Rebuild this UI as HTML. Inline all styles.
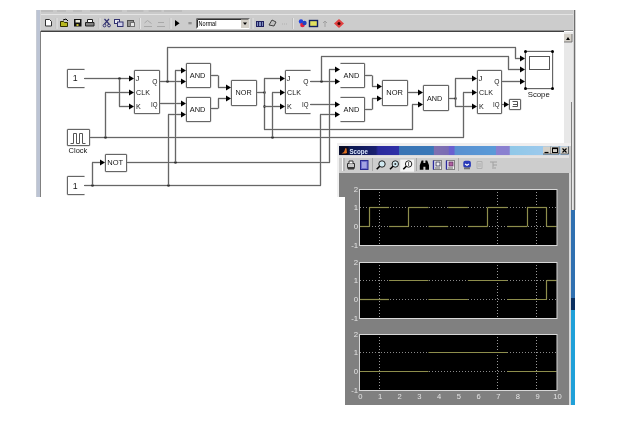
<!DOCTYPE html><html><head><meta charset="utf-8"><style>html,body{margin:0;padding:0;background:#fff;width:621px;height:432px;overflow:hidden}svg{display:block;filter:blur(0.4px);font-family:"Liberation Sans", sans-serif}.du line{stroke:#d4d4d4;stroke-width:2.2px}.d line{stroke:#666}.d text{fill:#141414}.d path,.d rect[stroke]{stroke:#555}</style></head><body>
<svg width="621" height="432" viewBox="0 0 621 432">
<rect x="36" y="10" width="540" height="21" fill="#cccccc"/>
<rect x="36" y="10" width="540" height="4.5" fill="#cacaca"/>
<line x1="36" y1="14.5" x2="576" y2="14.5" stroke="#e4e4e4" stroke-width="1" />
<line x1="36" y1="30.5" x2="576" y2="30.5" stroke="#909090" stroke-width="1" />
<line x1="40" y1="31.5" x2="564" y2="31.5" stroke="#404040" stroke-width="1" />
<rect x="36" y="10" width="5" height="187" fill="#d4d4d4"/>
<rect x="36.5" y="10" width="3.5" height="187" fill="#bcc4d4"/>
<line x1="40.5" y1="31" x2="40.5" y2="197" stroke="#808080" stroke-width="1" />
<rect x="41" y="32" width="523" height="168" fill="#ffffff"/>
<rect x="564" y="32" width="9" height="178" fill="#e8e8e8"/>
<rect x="564" y="34" width="8" height="8" fill="#d4d0c8"/>
<path d="M564,42 h8 v-8" fill="none" stroke="#606060" stroke-width="0.8"/>
<polygon points="566,40 568,37 570,40" fill="#000"/>
<line x1="571.5" y1="102" x2="571.5" y2="210" stroke="#808080" stroke-width="1" />
<rect x="573" y="10" width="3" height="200" fill="#d4d4d4"/>
<line x1="574.5" y1="10" x2="574.5" y2="210" stroke="#707070" stroke-width="1" />
<rect x="41" y="10" width="12" height="2" fill="#bdbdbd"/>
<rect x="57" y="10" width="9" height="2" fill="#bdbdbd"/>
<rect x="73" y="10" width="9" height="2" fill="#bdbdbd"/>
<rect x="90" y="10" width="32" height="2" fill="#bdbdbd"/>
<rect x="127" y="10" width="16.5" height="2" fill="#bdbdbd"/>
<rect x="148.6" y="10" width="12.900000000000006" height="2" fill="#bdbdbd"/>
<rect x="164" y="10" width="18" height="2" fill="#bdbdbd"/>
<line x1="56" y1="18" x2="56" y2="29" stroke="#bcbcbc" stroke-width="1" />
<line x1="57" y1="18" x2="57" y2="29" stroke="#e4e4e4" stroke-width="1" />
<line x1="99" y1="18" x2="99" y2="29" stroke="#bcbcbc" stroke-width="1" />
<line x1="100" y1="18" x2="100" y2="29" stroke="#e4e4e4" stroke-width="1" />
<line x1="139.5" y1="18" x2="139.5" y2="29" stroke="#bcbcbc" stroke-width="1" />
<line x1="140.5" y1="18" x2="140.5" y2="29" stroke="#e4e4e4" stroke-width="1" />
<line x1="170" y1="18" x2="170" y2="29" stroke="#bcbcbc" stroke-width="1" />
<line x1="171" y1="18" x2="171" y2="29" stroke="#e4e4e4" stroke-width="1" />
<line x1="252" y1="18" x2="252" y2="29" stroke="#bcbcbc" stroke-width="1" />
<line x1="253" y1="18" x2="253" y2="29" stroke="#e4e4e4" stroke-width="1" />
<line x1="292.5" y1="18" x2="292.5" y2="29" stroke="#bcbcbc" stroke-width="1" />
<line x1="293.5" y1="18" x2="293.5" y2="29" stroke="#e4e4e4" stroke-width="1" />
<path d="M45.5,19.5 h4 l2,2 v4.5 h-6 z" fill="#fff" stroke="#303030" stroke-width="1"/>
<path d="M60.5,21.5 h3 l1,1 h3 v4 h-7 z" fill="#b8b820" stroke="#303000" stroke-width="1"/>
<path d="M63,20 l3,-1 l2,2" fill="none" stroke="#000" stroke-width="1"/>
<rect x="74" y="19" width="7.5" height="7.5" fill="#101010"/>
<rect x="75.5" y="20" width="4.5" height="2.5" fill="#e8e8d8"/>
<rect x="76.5" y="24" width="2.0" height="2" fill="#c8c030"/>
<path d="M85.5,22.5 h8.5 v3.5 h-8.5 z" fill="#808080" stroke="#202020" stroke-width="1"/>
<path d="M87.5,19.5 h5 v3 h-5 z" fill="#fff" stroke="#202020" stroke-width="1"/>
<path d="M104.5,19 l4.5,5 M109,19 l-4.5,5" stroke="#303070" stroke-width="1.2" fill="none"/>
<circle cx="104.5" cy="25.5" r="1.4" fill="none" stroke="#303070"/><circle cx="109" cy="25.5" r="1.4" fill="none" stroke="#303070"/>
<rect x="114.5" y="19.5" width="5" height="4" fill="#e8e8f0" stroke="#303070"/><rect x="117.5" y="22" width="5.5" height="4.5" fill="#d0d0e8" stroke="#303070"/>
<rect x="127.5" y="20.5" width="6" height="6" fill="#909090" stroke="#505050"/><rect x="130.5" y="22.5" width="4" height="4" fill="#e8e8e8" stroke="#707070"/>
<path d="M144,26.5 h8 M144.5,23 l3,-2.5 l4,3" stroke="#a8a8a8" fill="none"/>
<path d="M157,26.5 h8 M158,22.5 h6" stroke="#a8a8a8" fill="none"/>
<polygon points="175,20 179.6,23.2 175,26.4" fill="#000"/>
<rect x="188.4" y="22" width="3.299999999999983" height="2.3000000000000007" fill="#909090"/>
<rect x="196" y="18" width="53.5" height="11" fill="#ffffff"/>
<path d="M196.5,28.5 v-10 h53" fill="none" stroke="#707070"/>
<path d="M197.5,27.5 v-8 h51" fill="none" stroke="#303030"/>
<rect x="241" y="19.5" width="8" height="8.5" fill="#d4d0c8"/>
<polygon points="243,22.5 247,22.5 245,25" fill="#000"/>
<text x="198.6" y="25.8" font-size="6.6" fill="#000" font-weight="normal" textLength="17.80" lengthAdjust="spacingAndGlyphs">Normal</text>
<rect x="256.5" y="21.5" width="7" height="5" fill="#8090c0" stroke="#202060"/><path d="M258.5,21.5 v5 M261.5,21.5 v5" stroke="#202060"/>
<path d="M269,25 l3,-5 l4,2 l-2,4 z" fill="#c0c0c0" stroke="#404040"/>
<path d="M282,24 h6" stroke="#b0b0b0" stroke-dasharray="1,1"/>
<circle cx="301" cy="21.5" r="2.2" fill="#2040e0"/><circle cx="302.5" cy="25" r="2.3" fill="#e02040"/><circle cx="304.5" cy="23" r="2.2" fill="#2040c0"/>
<rect x="309.5" y="20.5" width="8" height="6" fill="#e0e060" stroke="#102060" stroke-width="1.4"/>
<path d="M325,27 v-6 l-2,2 M325,21 l2,2" stroke="#a0a0a0" fill="none"/>
<polygon points="339,19 344,23.5 339,28 334,23.5" fill="#e04040"/><circle cx="339" cy="23.5" r="1.5" fill="#400000"/>
<g class="du"><line x1="67.5" y1="69.5" x2="84.5" y2="69.5" stroke="#000" stroke-width="1" />
<line x1="67.5" y1="87.5" x2="84.5" y2="87.5" stroke="#000" stroke-width="1" />
<line x1="67.5" y1="69.5" x2="67.5" y2="87.5" stroke="#000" stroke-width="1" />
<line x1="67.5" y1="176.5" x2="84.5" y2="176.5" stroke="#000" stroke-width="1" />
<line x1="67.5" y1="194.5" x2="84.5" y2="194.5" stroke="#000" stroke-width="1" />
<line x1="67.5" y1="176.5" x2="67.5" y2="194.5" stroke="#000" stroke-width="1" />
<line x1="67.5" y1="129.5" x2="89.5" y2="129.5" stroke="#000" stroke-width="1" />
<line x1="67.5" y1="145.5" x2="89.5" y2="145.5" stroke="#000" stroke-width="1" />
<line x1="67.5" y1="129.5" x2="67.5" y2="145.5" stroke="#000" stroke-width="1" />
<line x1="89.5" y1="129.5" x2="89.5" y2="145.5" stroke="#000" stroke-width="1" />
<line x1="105.5" y1="154.5" x2="126.5" y2="154.5" stroke="#000" stroke-width="1" />
<line x1="105.5" y1="171.5" x2="126.5" y2="171.5" stroke="#000" stroke-width="1" />
<line x1="105.5" y1="154.5" x2="105.5" y2="171.5" stroke="#000" stroke-width="1" />
<line x1="126.5" y1="154.5" x2="126.5" y2="171.5" stroke="#000" stroke-width="1" />
<line x1="134.5" y1="70.5" x2="159.5" y2="70.5" stroke="#000" stroke-width="1" />
<line x1="134.5" y1="113.5" x2="159.5" y2="113.5" stroke="#000" stroke-width="1" />
<line x1="134.5" y1="70.5" x2="134.5" y2="113.5" stroke="#000" stroke-width="1" />
<line x1="159.5" y1="70.5" x2="159.5" y2="113.5" stroke="#000" stroke-width="1" />
<line x1="285.5" y1="70.5" x2="310.5" y2="70.5" stroke="#000" stroke-width="1" />
<line x1="285.5" y1="113.5" x2="310.5" y2="113.5" stroke="#000" stroke-width="1" />
<line x1="285.5" y1="70.5" x2="285.5" y2="113.5" stroke="#000" stroke-width="1" />
<line x1="477.5" y1="70.5" x2="501.5" y2="70.5" stroke="#000" stroke-width="1" />
<line x1="477.5" y1="113.5" x2="501.5" y2="113.5" stroke="#000" stroke-width="1" />
<line x1="477.5" y1="70.5" x2="477.5" y2="113.5" stroke="#000" stroke-width="1" />
<line x1="501.5" y1="70.5" x2="501.5" y2="113.5" stroke="#000" stroke-width="1" />
<line x1="186.5" y1="63.5" x2="210.5" y2="63.5" stroke="#000" stroke-width="1" />
<line x1="186.5" y1="87.5" x2="210.5" y2="87.5" stroke="#000" stroke-width="1" />
<line x1="186.5" y1="63.5" x2="186.5" y2="87.5" stroke="#000" stroke-width="1" />
<line x1="210.5" y1="63.5" x2="210.5" y2="87.5" stroke="#000" stroke-width="1" />
<line x1="186.5" y1="97.5" x2="210.5" y2="97.5" stroke="#000" stroke-width="1" />
<line x1="186.5" y1="121.5" x2="210.5" y2="121.5" stroke="#000" stroke-width="1" />
<line x1="186.5" y1="97.5" x2="186.5" y2="121.5" stroke="#000" stroke-width="1" />
<line x1="210.5" y1="97.5" x2="210.5" y2="121.5" stroke="#000" stroke-width="1" />
<line x1="340.5" y1="63.5" x2="364.5" y2="63.5" stroke="#000" stroke-width="1" />
<line x1="340.5" y1="87.5" x2="364.5" y2="87.5" stroke="#000" stroke-width="1" />
<line x1="364.5" y1="63.5" x2="364.5" y2="87.5" stroke="#000" stroke-width="1" />
<line x1="340.5" y1="97.5" x2="364.5" y2="97.5" stroke="#000" stroke-width="1" />
<line x1="340.5" y1="121.5" x2="364.5" y2="121.5" stroke="#000" stroke-width="1" />
<line x1="364.5" y1="97.5" x2="364.5" y2="121.5" stroke="#000" stroke-width="1" />
<line x1="423.5" y1="85.5" x2="448.5" y2="85.5" stroke="#000" stroke-width="1" />
<line x1="423.5" y1="110.5" x2="448.5" y2="110.5" stroke="#000" stroke-width="1" />
<line x1="423.5" y1="85.5" x2="423.5" y2="110.5" stroke="#000" stroke-width="1" />
<line x1="448.5" y1="85.5" x2="448.5" y2="110.5" stroke="#000" stroke-width="1" />
<line x1="231.5" y1="80.5" x2="256.5" y2="80.5" stroke="#000" stroke-width="1" />
<line x1="231.5" y1="105.5" x2="256.5" y2="105.5" stroke="#000" stroke-width="1" />
<line x1="231.5" y1="80.5" x2="231.5" y2="105.5" stroke="#000" stroke-width="1" />
<line x1="256.5" y1="80.5" x2="256.5" y2="105.5" stroke="#000" stroke-width="1" />
<line x1="382.5" y1="80.5" x2="407.5" y2="80.5" stroke="#000" stroke-width="1" />
<line x1="382.5" y1="105.5" x2="407.5" y2="105.5" stroke="#000" stroke-width="1" />
<line x1="382.5" y1="80.5" x2="382.5" y2="105.5" stroke="#000" stroke-width="1" />
<line x1="407.5" y1="80.5" x2="407.5" y2="105.5" stroke="#000" stroke-width="1" />
<line x1="525.5" y1="51.5" x2="552.5" y2="51.5" stroke="#000" stroke-width="1" />
<line x1="525.5" y1="88.5" x2="552.5" y2="88.5" stroke="#000" stroke-width="1" />
<line x1="525.5" y1="51.5" x2="525.5" y2="88.5" stroke="#000" stroke-width="1" />
<line x1="552.5" y1="51.5" x2="552.5" y2="88.5" stroke="#000" stroke-width="1" />
<line x1="509.5" y1="99.5" x2="520.5" y2="99.5" stroke="#000" stroke-width="1" />
<line x1="509.5" y1="109.5" x2="520.5" y2="109.5" stroke="#000" stroke-width="1" />
<line x1="509.5" y1="99.5" x2="509.5" y2="109.5" stroke="#000" stroke-width="1" />
<line x1="520.5" y1="99.5" x2="520.5" y2="109.5" stroke="#000" stroke-width="1" />
<line x1="84" y1="78.5" x2="130" y2="78.5" stroke="#000" stroke-width="1" />
<line x1="119.5" y1="78.5" x2="119.5" y2="106.5" stroke="#000" stroke-width="1" />
<line x1="119" y1="106.5" x2="130" y2="106.5" stroke="#000" stroke-width="1" />
<line x1="89" y1="137.5" x2="464" y2="137.5" stroke="#000" stroke-width="1" />
<line x1="105.5" y1="92.5" x2="105.5" y2="137.5" stroke="#000" stroke-width="1" />
<line x1="105" y1="92.5" x2="130" y2="92.5" stroke="#000" stroke-width="1" />
<line x1="272.5" y1="92.5" x2="272.5" y2="137.5" stroke="#000" stroke-width="1" />
<line x1="272" y1="92.5" x2="281" y2="92.5" stroke="#000" stroke-width="1" />
<line x1="463.5" y1="92.5" x2="463.5" y2="137.5" stroke="#000" stroke-width="1" />
<line x1="463" y1="92.5" x2="473" y2="92.5" stroke="#000" stroke-width="1" />
<line x1="159" y1="81.5" x2="182" y2="81.5" stroke="#000" stroke-width="1" />
<line x1="167.5" y1="47.5" x2="167.5" y2="81.5" stroke="#000" stroke-width="1" />
<line x1="167" y1="47.5" x2="516" y2="47.5" stroke="#000" stroke-width="1" />
<line x1="515.5" y1="47.5" x2="515.5" y2="58.5" stroke="#000" stroke-width="1" />
<line x1="515" y1="58.5" x2="521" y2="58.5" stroke="#000" stroke-width="1" />
<line x1="159" y1="103.5" x2="182" y2="103.5" stroke="#000" stroke-width="1" />
<line x1="84" y1="185.5" x2="321" y2="185.5" stroke="#000" stroke-width="1" />
<line x1="92.5" y1="162.5" x2="92.5" y2="185.5" stroke="#000" stroke-width="1" />
<line x1="92" y1="162.5" x2="101" y2="162.5" stroke="#000" stroke-width="1" />
<line x1="168.5" y1="114.5" x2="168.5" y2="185.5" stroke="#000" stroke-width="1" />
<line x1="168" y1="114.5" x2="182" y2="114.5" stroke="#000" stroke-width="1" />
<line x1="320.5" y1="114.5" x2="320.5" y2="185.5" stroke="#000" stroke-width="1" />
<line x1="320" y1="114.5" x2="336" y2="114.5" stroke="#000" stroke-width="1" />
<line x1="127" y1="162.5" x2="330" y2="162.5" stroke="#000" stroke-width="1" />
<line x1="175.5" y1="70.5" x2="175.5" y2="162.5" stroke="#000" stroke-width="1" />
<line x1="175" y1="70.5" x2="182" y2="70.5" stroke="#000" stroke-width="1" />
<line x1="329.5" y1="69.5" x2="329.5" y2="162.5" stroke="#000" stroke-width="1" />
<line x1="329" y1="69.5" x2="336" y2="69.5" stroke="#000" stroke-width="1" />
<line x1="211" y1="75.5" x2="218" y2="75.5" stroke="#000" stroke-width="1" />
<line x1="218.5" y1="75.5" x2="218.5" y2="87.5" stroke="#000" stroke-width="1" />
<line x1="218" y1="87.5" x2="227" y2="87.5" stroke="#000" stroke-width="1" />
<line x1="211" y1="108.5" x2="218" y2="108.5" stroke="#000" stroke-width="1" />
<line x1="218.5" y1="98.5" x2="218.5" y2="108.5" stroke="#000" stroke-width="1" />
<line x1="218" y1="98.5" x2="227" y2="98.5" stroke="#000" stroke-width="1" />
<line x1="256" y1="92.5" x2="264" y2="92.5" stroke="#000" stroke-width="1" />
<line x1="264.5" y1="78.5" x2="264.5" y2="129.5" stroke="#000" stroke-width="1" />
<line x1="264" y1="78.5" x2="281" y2="78.5" stroke="#000" stroke-width="1" />
<line x1="264" y1="106.5" x2="281" y2="106.5" stroke="#000" stroke-width="1" />
<line x1="264" y1="129.5" x2="413" y2="129.5" stroke="#000" stroke-width="1" />
<line x1="412.5" y1="104.5" x2="412.5" y2="129.5" stroke="#000" stroke-width="1" />
<line x1="412" y1="104.5" x2="419" y2="104.5" stroke="#000" stroke-width="1" />
<line x1="310" y1="81.5" x2="336" y2="81.5" stroke="#000" stroke-width="1" />
<line x1="321.5" y1="56.5" x2="321.5" y2="81.5" stroke="#000" stroke-width="1" />
<line x1="321" y1="56.5" x2="509" y2="56.5" stroke="#000" stroke-width="1" />
<line x1="508.5" y1="56.5" x2="508.5" y2="69.5" stroke="#000" stroke-width="1" />
<line x1="508" y1="69.5" x2="521" y2="69.5" stroke="#000" stroke-width="1" />
<line x1="310" y1="104.5" x2="336" y2="104.5" stroke="#000" stroke-width="1" />
<line x1="364" y1="75.5" x2="372" y2="75.5" stroke="#000" stroke-width="1" />
<line x1="372.5" y1="75.5" x2="372.5" y2="86.5" stroke="#000" stroke-width="1" />
<line x1="372" y1="86.5" x2="378" y2="86.5" stroke="#000" stroke-width="1" />
<line x1="364" y1="109.5" x2="372" y2="109.5" stroke="#000" stroke-width="1" />
<line x1="372.5" y1="98.5" x2="372.5" y2="109.5" stroke="#000" stroke-width="1" />
<line x1="372" y1="98.5" x2="378" y2="98.5" stroke="#000" stroke-width="1" />
<line x1="408" y1="92.5" x2="419" y2="92.5" stroke="#000" stroke-width="1" />
<line x1="448" y1="98.5" x2="455" y2="98.5" stroke="#000" stroke-width="1" />
<line x1="455.5" y1="78.5" x2="455.5" y2="106.5" stroke="#000" stroke-width="1" />
<line x1="455" y1="78.5" x2="473" y2="78.5" stroke="#000" stroke-width="1" />
<line x1="455" y1="106.5" x2="473" y2="106.5" stroke="#000" stroke-width="1" />
<line x1="501" y1="81.5" x2="521" y2="81.5" stroke="#000" stroke-width="1" />
<line x1="501" y1="104.5" x2="505" y2="104.5" stroke="#000" stroke-width="1" /></g>
<g class="d"><rect x="67.5" y="69.5" width="17.0" height="18.0" fill="#ffffff"/>
<line x1="67.5" y1="69.5" x2="84.5" y2="69.5" stroke="#000" stroke-width="1" />
<line x1="67.5" y1="87.5" x2="84.5" y2="87.5" stroke="#000" stroke-width="1" />
<line x1="67.5" y1="69.5" x2="67.5" y2="87.5" stroke="#000" stroke-width="1" />
<text x="75.3" y="81.3" font-size="8.8" fill="#000" text-anchor="middle" font-weight="normal" >1</text>
<rect x="67.5" y="176.5" width="17.0" height="18.0" fill="#ffffff"/>
<line x1="67.5" y1="176.5" x2="84.5" y2="176.5" stroke="#000" stroke-width="1" />
<line x1="67.5" y1="194.5" x2="84.5" y2="194.5" stroke="#000" stroke-width="1" />
<line x1="67.5" y1="176.5" x2="67.5" y2="194.5" stroke="#000" stroke-width="1" />
<text x="75.3" y="188.5" font-size="8.8" fill="#000" text-anchor="middle" font-weight="normal" >1</text>
<rect x="67.5" y="129.5" width="22.0" height="16.0" fill="#ffffff"/>
<line x1="67.5" y1="129.5" x2="89.5" y2="129.5" stroke="#000" stroke-width="1" />
<line x1="67.5" y1="145.5" x2="89.5" y2="145.5" stroke="#000" stroke-width="1" />
<line x1="67.5" y1="129.5" x2="67.5" y2="145.5" stroke="#000" stroke-width="1" />
<line x1="89.5" y1="129.5" x2="89.5" y2="145.5" stroke="#000" stroke-width="1" />
<path d="M70.5,143.5 h3 v-10 h3 v10 h3 v-10 h3 v10 h3" fill="none" stroke="#000"/>
<text x="68.6" y="153.3" font-size="8" fill="#000" font-weight="normal" textLength="18.70" lengthAdjust="spacingAndGlyphs">Clock</text>
<rect x="105.5" y="154.5" width="21.0" height="17.0" fill="#ffffff"/>
<line x1="105.5" y1="154.5" x2="126.5" y2="154.5" stroke="#000" stroke-width="1" />
<line x1="105.5" y1="171.5" x2="126.5" y2="171.5" stroke="#000" stroke-width="1" />
<line x1="105.5" y1="154.5" x2="105.5" y2="171.5" stroke="#000" stroke-width="1" />
<line x1="126.5" y1="154.5" x2="126.5" y2="171.5" stroke="#000" stroke-width="1" />
<text x="107.3" y="165" font-size="8" fill="#000" font-weight="normal" textLength="15.90" lengthAdjust="spacingAndGlyphs">NOT</text>
<rect x="134.5" y="70.5" width="25.0" height="43.0" fill="#ffffff"/>
<line x1="134.5" y1="70.5" x2="159.5" y2="70.5" stroke="#000" stroke-width="1" />
<line x1="134.5" y1="113.5" x2="159.5" y2="113.5" stroke="#000" stroke-width="1" />
<line x1="134.5" y1="70.5" x2="134.5" y2="113.5" stroke="#000" stroke-width="1" />
<line x1="159.5" y1="70.5" x2="159.5" y2="113.5" stroke="#000" stroke-width="1" />
<text x="135.6" y="81" font-size="8" fill="#000" font-weight="normal" textLength="3.80" lengthAdjust="spacingAndGlyphs">J</text>
<text x="136.1" y="95.1" font-size="8" fill="#000" font-weight="normal" textLength="13.80" lengthAdjust="spacingAndGlyphs">CLK</text>
<text x="136.1" y="109.1" font-size="8" fill="#000" font-weight="normal" textLength="4.80" lengthAdjust="spacingAndGlyphs">K</text>
<text x="152.29999999999998" y="83.8" font-size="7.8" fill="#000" font-weight="normal" textLength="5.20" lengthAdjust="spacingAndGlyphs">Q</text>
<text x="151.1" y="106.7" font-size="7.8" fill="#000" font-weight="normal" textLength="6.50" lengthAdjust="spacingAndGlyphs">IQ</text>
<rect x="285.5" y="70.5" width="25.0" height="43.0" fill="#ffffff"/>
<line x1="285.5" y1="70.5" x2="310.5" y2="70.5" stroke="#000" stroke-width="1" />
<line x1="285.5" y1="113.5" x2="310.5" y2="113.5" stroke="#000" stroke-width="1" />
<line x1="285.5" y1="70.5" x2="285.5" y2="113.5" stroke="#000" stroke-width="1" />
<text x="286.6" y="81" font-size="8" fill="#000" font-weight="normal" textLength="3.80" lengthAdjust="spacingAndGlyphs">J</text>
<text x="287.1" y="95.1" font-size="8" fill="#000" font-weight="normal" textLength="13.80" lengthAdjust="spacingAndGlyphs">CLK</text>
<text x="287.1" y="109.1" font-size="8" fill="#000" font-weight="normal" textLength="4.80" lengthAdjust="spacingAndGlyphs">K</text>
<text x="303.3" y="83.8" font-size="7.8" fill="#000" font-weight="normal" textLength="5.20" lengthAdjust="spacingAndGlyphs">Q</text>
<text x="302.1" y="106.7" font-size="7.8" fill="#000" font-weight="normal" textLength="6.50" lengthAdjust="spacingAndGlyphs">IQ</text>
<rect x="477.5" y="70.5" width="24.0" height="43.0" fill="#ffffff"/>
<line x1="477.5" y1="70.5" x2="501.5" y2="70.5" stroke="#000" stroke-width="1" />
<line x1="477.5" y1="113.5" x2="501.5" y2="113.5" stroke="#000" stroke-width="1" />
<line x1="477.5" y1="70.5" x2="477.5" y2="113.5" stroke="#000" stroke-width="1" />
<line x1="501.5" y1="70.5" x2="501.5" y2="113.5" stroke="#000" stroke-width="1" />
<text x="478.6" y="81" font-size="8" fill="#000" font-weight="normal" textLength="3.80" lengthAdjust="spacingAndGlyphs">J</text>
<text x="479.1" y="95.1" font-size="8" fill="#000" font-weight="normal" textLength="13.80" lengthAdjust="spacingAndGlyphs">CLK</text>
<text x="479.1" y="109.1" font-size="8" fill="#000" font-weight="normal" textLength="4.80" lengthAdjust="spacingAndGlyphs">K</text>
<text x="494.3" y="83.8" font-size="7.8" fill="#000" font-weight="normal" textLength="5.20" lengthAdjust="spacingAndGlyphs">Q</text>
<text x="493.1" y="106.7" font-size="7.8" fill="#000" font-weight="normal" textLength="6.50" lengthAdjust="spacingAndGlyphs">IQ</text>
<rect x="186.5" y="63.5" width="24.0" height="24.0" fill="#ffffff"/>
<line x1="186.5" y1="63.5" x2="210.5" y2="63.5" stroke="#000" stroke-width="1" />
<line x1="186.5" y1="87.5" x2="210.5" y2="87.5" stroke="#000" stroke-width="1" />
<line x1="186.5" y1="63.5" x2="186.5" y2="87.5" stroke="#000" stroke-width="1" />
<line x1="210.5" y1="63.5" x2="210.5" y2="87.5" stroke="#000" stroke-width="1" />
<text x="189.7" y="77.8" font-size="8.1" fill="#000" font-weight="normal" textLength="15.70" lengthAdjust="spacingAndGlyphs">AND</text>
<rect x="186.5" y="97.5" width="24.0" height="24.0" fill="#ffffff"/>
<line x1="186.5" y1="97.5" x2="210.5" y2="97.5" stroke="#000" stroke-width="1" />
<line x1="186.5" y1="121.5" x2="210.5" y2="121.5" stroke="#000" stroke-width="1" />
<line x1="186.5" y1="97.5" x2="186.5" y2="121.5" stroke="#000" stroke-width="1" />
<line x1="210.5" y1="97.5" x2="210.5" y2="121.5" stroke="#000" stroke-width="1" />
<text x="189.7" y="111.6" font-size="8.1" fill="#000" font-weight="normal" textLength="15.70" lengthAdjust="spacingAndGlyphs">AND</text>
<rect x="340.5" y="63.5" width="24.0" height="24.0" fill="#ffffff"/>
<line x1="340.5" y1="63.5" x2="364.5" y2="63.5" stroke="#000" stroke-width="1" />
<line x1="340.5" y1="87.5" x2="364.5" y2="87.5" stroke="#000" stroke-width="1" />
<line x1="364.5" y1="63.5" x2="364.5" y2="87.5" stroke="#000" stroke-width="1" />
<text x="343.6" y="78.1" font-size="8.1" fill="#000" font-weight="normal" textLength="15.80" lengthAdjust="spacingAndGlyphs">AND</text>
<rect x="340.5" y="97.5" width="24.0" height="24.0" fill="#ffffff"/>
<line x1="340.5" y1="97.5" x2="364.5" y2="97.5" stroke="#000" stroke-width="1" />
<line x1="340.5" y1="121.5" x2="364.5" y2="121.5" stroke="#000" stroke-width="1" />
<line x1="364.5" y1="97.5" x2="364.5" y2="121.5" stroke="#000" stroke-width="1" />
<text x="343.6" y="111.8" font-size="8.1" fill="#000" font-weight="normal" textLength="15.80" lengthAdjust="spacingAndGlyphs">AND</text>
<rect x="423.5" y="85.5" width="25.0" height="25.0" fill="#ffffff"/>
<line x1="423.5" y1="85.5" x2="448.5" y2="85.5" stroke="#000" stroke-width="1" />
<line x1="423.5" y1="110.5" x2="448.5" y2="110.5" stroke="#000" stroke-width="1" />
<line x1="423.5" y1="85.5" x2="423.5" y2="110.5" stroke="#000" stroke-width="1" />
<line x1="448.5" y1="85.5" x2="448.5" y2="110.5" stroke="#000" stroke-width="1" />
<text x="427.0" y="100.9" font-size="8.1" fill="#000" font-weight="normal" textLength="15.30" lengthAdjust="spacingAndGlyphs">AND</text>
<rect x="231.5" y="80.5" width="25.0" height="25.0" fill="#ffffff"/>
<line x1="231.5" y1="80.5" x2="256.5" y2="80.5" stroke="#000" stroke-width="1" />
<line x1="231.5" y1="105.5" x2="256.5" y2="105.5" stroke="#000" stroke-width="1" />
<line x1="231.5" y1="80.5" x2="231.5" y2="105.5" stroke="#000" stroke-width="1" />
<line x1="256.5" y1="80.5" x2="256.5" y2="105.5" stroke="#000" stroke-width="1" />
<text x="235.6" y="95.4" font-size="8" fill="#000" font-weight="normal" textLength="16.10" lengthAdjust="spacingAndGlyphs">NOR</text>
<rect x="382.5" y="80.5" width="25.0" height="25.0" fill="#ffffff"/>
<line x1="382.5" y1="80.5" x2="407.5" y2="80.5" stroke="#000" stroke-width="1" />
<line x1="382.5" y1="105.5" x2="407.5" y2="105.5" stroke="#000" stroke-width="1" />
<line x1="382.5" y1="80.5" x2="382.5" y2="105.5" stroke="#000" stroke-width="1" />
<line x1="407.5" y1="80.5" x2="407.5" y2="105.5" stroke="#000" stroke-width="1" />
<text x="386.3" y="95.2" font-size="8" fill="#000" font-weight="normal" textLength="16.60" lengthAdjust="spacingAndGlyphs">NOR</text>
<rect x="525.5" y="51.5" width="27.0" height="37.0" fill="#ffffff"/>
<line x1="525.5" y1="51.5" x2="552.5" y2="51.5" stroke="#000" stroke-width="1" />
<line x1="525.5" y1="88.5" x2="552.5" y2="88.5" stroke="#000" stroke-width="1" />
<line x1="525.5" y1="51.5" x2="525.5" y2="88.5" stroke="#000" stroke-width="1" />
<line x1="552.5" y1="51.5" x2="552.5" y2="88.5" stroke="#000" stroke-width="1" />
<rect x="529.5" y="56.5" width="20" height="13" fill="#fff" stroke="#000"/>
<circle cx="525.5" cy="51.5" r="1.5" fill="#000"/>
<circle cx="552.5" cy="51.5" r="1.5" fill="#000"/>
<circle cx="525.5" cy="88.5" r="1.5" fill="#000"/>
<circle cx="552.5" cy="88.5" r="1.5" fill="#000"/>
<text x="527.7" y="96.5" font-size="8" fill="#000" font-weight="normal" textLength="22.10" lengthAdjust="spacingAndGlyphs">Scope</text>
<rect x="509.5" y="99.5" width="11.0" height="10.0" fill="#ffffff"/>
<line x1="509.5" y1="99.5" x2="520.5" y2="99.5" stroke="#000" stroke-width="1" />
<line x1="509.5" y1="109.5" x2="520.5" y2="109.5" stroke="#000" stroke-width="1" />
<line x1="509.5" y1="99.5" x2="509.5" y2="109.5" stroke="#000" stroke-width="1" />
<line x1="520.5" y1="99.5" x2="520.5" y2="109.5" stroke="#000" stroke-width="1" />
<path d="M512.5,101.5 h5 v5 h-5 M513,104.5 h4.5" fill="none" stroke="#000"/>
<line x1="84" y1="78.5" x2="130" y2="78.5" stroke="#000" stroke-width="1" />
<polygon points="134,78.5 129,75.5 129,81.5" fill="#000"/>
<rect x="118.5" y="77.5" width="2" height="2" fill="#000"/>
<line x1="119.5" y1="78.5" x2="119.5" y2="106.5" stroke="#000" stroke-width="1" />
<line x1="119" y1="106.5" x2="130" y2="106.5" stroke="#000" stroke-width="1" />
<polygon points="134,106.5 129,103.5 129,109.5" fill="#000"/>
<line x1="89" y1="137.5" x2="464" y2="137.5" stroke="#000" stroke-width="1" />
<rect x="104.5" y="136.5" width="2" height="2" fill="#000"/>
<line x1="105.5" y1="92.5" x2="105.5" y2="137.5" stroke="#000" stroke-width="1" />
<line x1="105" y1="92.5" x2="130" y2="92.5" stroke="#000" stroke-width="1" />
<polygon points="134,92.5 129,89.5 129,95.5" fill="#000"/>
<rect x="271.5" y="136.5" width="2" height="2" fill="#000"/>
<line x1="272.5" y1="92.5" x2="272.5" y2="137.5" stroke="#000" stroke-width="1" />
<line x1="272" y1="92.5" x2="281" y2="92.5" stroke="#000" stroke-width="1" />
<polygon points="285,92.5 280,89.5 280,95.5" fill="#000"/>
<line x1="463.5" y1="92.5" x2="463.5" y2="137.5" stroke="#000" stroke-width="1" />
<line x1="463" y1="92.5" x2="473" y2="92.5" stroke="#000" stroke-width="1" />
<polygon points="477,92.5 472,89.5 472,95.5" fill="#000"/>
<line x1="159" y1="81.5" x2="182" y2="81.5" stroke="#000" stroke-width="1" />
<polygon points="186,81.5 181,78.5 181,84.5" fill="#000"/>
<rect x="166.5" y="80.5" width="2" height="2" fill="#000"/>
<line x1="167.5" y1="47.5" x2="167.5" y2="81.5" stroke="#000" stroke-width="1" />
<line x1="167" y1="47.5" x2="516" y2="47.5" stroke="#000" stroke-width="1" />
<line x1="515.5" y1="47.5" x2="515.5" y2="58.5" stroke="#000" stroke-width="1" />
<line x1="515" y1="58.5" x2="521" y2="58.5" stroke="#000" stroke-width="1" />
<polygon points="525,58.5 520,55.5 520,61.5" fill="#000"/>
<line x1="159" y1="103.5" x2="182" y2="103.5" stroke="#000" stroke-width="1" />
<polygon points="186,103.5 181,100.5 181,106.5" fill="#000"/>
<line x1="84" y1="185.5" x2="321" y2="185.5" stroke="#000" stroke-width="1" />
<rect x="91.5" y="184.5" width="2" height="2" fill="#000"/>
<line x1="92.5" y1="162.5" x2="92.5" y2="185.5" stroke="#000" stroke-width="1" />
<line x1="92" y1="162.5" x2="101" y2="162.5" stroke="#000" stroke-width="1" />
<polygon points="105,162.5 100,159.5 100,165.5" fill="#000"/>
<rect x="167.5" y="184.5" width="2" height="2" fill="#000"/>
<line x1="168.5" y1="114.5" x2="168.5" y2="185.5" stroke="#000" stroke-width="1" />
<line x1="168" y1="114.5" x2="182" y2="114.5" stroke="#000" stroke-width="1" />
<polygon points="186,114.5 181,111.5 181,117.5" fill="#000"/>
<line x1="320.5" y1="114.5" x2="320.5" y2="185.5" stroke="#000" stroke-width="1" />
<line x1="320" y1="114.5" x2="336" y2="114.5" stroke="#000" stroke-width="1" />
<polygon points="340,114.5 335,111.5 335,117.5" fill="#000"/>
<line x1="127" y1="162.5" x2="330" y2="162.5" stroke="#000" stroke-width="1" />
<rect x="174.5" y="161.5" width="2" height="2" fill="#000"/>
<line x1="175.5" y1="70.5" x2="175.5" y2="162.5" stroke="#000" stroke-width="1" />
<line x1="175" y1="70.5" x2="182" y2="70.5" stroke="#000" stroke-width="1" />
<polygon points="186,70.5 181,67.5 181,73.5" fill="#000"/>
<line x1="329.5" y1="69.5" x2="329.5" y2="162.5" stroke="#000" stroke-width="1" />
<line x1="329" y1="69.5" x2="336" y2="69.5" stroke="#000" stroke-width="1" />
<polygon points="340,69.5 335,66.5 335,72.5" fill="#000"/>
<line x1="211" y1="75.5" x2="218" y2="75.5" stroke="#000" stroke-width="1" />
<line x1="218.5" y1="75.5" x2="218.5" y2="87.5" stroke="#000" stroke-width="1" />
<line x1="218" y1="87.5" x2="227" y2="87.5" stroke="#000" stroke-width="1" />
<polygon points="231,87.5 226,84.5 226,90.5" fill="#000"/>
<line x1="211" y1="108.5" x2="218" y2="108.5" stroke="#000" stroke-width="1" />
<line x1="218.5" y1="98.5" x2="218.5" y2="108.5" stroke="#000" stroke-width="1" />
<line x1="218" y1="98.5" x2="227" y2="98.5" stroke="#000" stroke-width="1" />
<polygon points="231,98.5 226,95.5 226,101.5" fill="#000"/>
<line x1="256" y1="92.5" x2="264" y2="92.5" stroke="#000" stroke-width="1" />
<rect x="263.5" y="91.5" width="2" height="2" fill="#000"/>
<line x1="264.5" y1="78.5" x2="264.5" y2="129.5" stroke="#000" stroke-width="1" />
<line x1="264" y1="78.5" x2="281" y2="78.5" stroke="#000" stroke-width="1" />
<polygon points="285,78.5 280,75.5 280,81.5" fill="#000"/>
<rect x="263.5" y="105.5" width="2" height="2" fill="#000"/>
<line x1="264" y1="106.5" x2="281" y2="106.5" stroke="#000" stroke-width="1" />
<polygon points="285,106.5 280,103.5 280,109.5" fill="#000"/>
<line x1="264" y1="129.5" x2="413" y2="129.5" stroke="#000" stroke-width="1" />
<line x1="412.5" y1="104.5" x2="412.5" y2="129.5" stroke="#000" stroke-width="1" />
<line x1="412" y1="104.5" x2="419" y2="104.5" stroke="#000" stroke-width="1" />
<polygon points="423,104.5 418,101.5 418,107.5" fill="#000"/>
<line x1="310" y1="81.5" x2="336" y2="81.5" stroke="#000" stroke-width="1" />
<polygon points="340,81.5 335,78.5 335,84.5" fill="#000"/>
<rect x="320.5" y="80.5" width="2" height="2" fill="#000"/>
<line x1="321.5" y1="56.5" x2="321.5" y2="81.5" stroke="#000" stroke-width="1" />
<line x1="321" y1="56.5" x2="509" y2="56.5" stroke="#000" stroke-width="1" />
<line x1="508.5" y1="56.5" x2="508.5" y2="69.5" stroke="#000" stroke-width="1" />
<line x1="508" y1="69.5" x2="521" y2="69.5" stroke="#000" stroke-width="1" />
<polygon points="525,69.5 520,66.5 520,72.5" fill="#000"/>
<line x1="310" y1="104.5" x2="336" y2="104.5" stroke="#000" stroke-width="1" />
<polygon points="340,104.5 335,101.5 335,107.5" fill="#000"/>
<line x1="364" y1="75.5" x2="372" y2="75.5" stroke="#000" stroke-width="1" />
<line x1="372.5" y1="75.5" x2="372.5" y2="86.5" stroke="#000" stroke-width="1" />
<line x1="372" y1="86.5" x2="378" y2="86.5" stroke="#000" stroke-width="1" />
<polygon points="382,86.5 377,83.5 377,89.5" fill="#000"/>
<line x1="364" y1="109.5" x2="372" y2="109.5" stroke="#000" stroke-width="1" />
<line x1="372.5" y1="98.5" x2="372.5" y2="109.5" stroke="#000" stroke-width="1" />
<line x1="372" y1="98.5" x2="378" y2="98.5" stroke="#000" stroke-width="1" />
<polygon points="382,98.5 377,95.5 377,101.5" fill="#000"/>
<line x1="408" y1="92.5" x2="419" y2="92.5" stroke="#000" stroke-width="1" />
<polygon points="423,92.5 418,89.5 418,95.5" fill="#000"/>
<line x1="448" y1="98.5" x2="455" y2="98.5" stroke="#000" stroke-width="1" />
<rect x="454.5" y="97.5" width="2" height="2" fill="#000"/>
<line x1="455.5" y1="78.5" x2="455.5" y2="106.5" stroke="#000" stroke-width="1" />
<line x1="455" y1="78.5" x2="473" y2="78.5" stroke="#000" stroke-width="1" />
<polygon points="477,78.5 472,75.5 472,81.5" fill="#000"/>
<line x1="455" y1="106.5" x2="473" y2="106.5" stroke="#000" stroke-width="1" />
<polygon points="477,106.5 472,103.5 472,109.5" fill="#000"/>
<line x1="501" y1="81.5" x2="521" y2="81.5" stroke="#000" stroke-width="1" />
<polygon points="525,81.5 520,78.5 520,84.5" fill="#000"/>
<line x1="501" y1="104.5" x2="505" y2="104.5" stroke="#000" stroke-width="1" />
<polygon points="509,104.5 504,101.5 504,107.5" fill="#000"/></g>
<rect x="337" y="143" width="234" height="54" fill="#cdcdcd"/>
<rect x="337" y="143" width="234" height="3" fill="#f0eeee"/>
<rect x="337" y="143" width="2" height="54" fill="#f0f0f0"/>
<defs><linearGradient id="tg" x1="0" x2="1" y1="0" y2="0"><stop offset="0" stop-color="#0a1030"/><stop offset="0.05" stop-color="#0c1850"/><stop offset="0.16" stop-color="#1a2070"/><stop offset="0.17" stop-color="#2a2a9c"/><stop offset="0.26" stop-color="#3030a8"/><stop offset="0.261" stop-color="#3a74b4"/><stop offset="0.41" stop-color="#3a78b8"/><stop offset="0.415" stop-color="#8070b0"/><stop offset="0.475" stop-color="#7a6cb4"/><stop offset="0.48" stop-color="#6a60d0"/><stop offset="0.5" stop-color="#6a60d0"/><stop offset="0.505" stop-color="#5a90d0"/><stop offset="0.68" stop-color="#5a9ad8"/><stop offset="0.685" stop-color="#8a80d0"/><stop offset="0.74" stop-color="#8a80d0"/><stop offset="0.745" stop-color="#90c8e8"/><stop offset="1" stop-color="#a6caf0"/></linearGradient></defs>
<rect x="339" y="146" width="230" height="9.199999999999989" fill="url(#tg)"/>
<rect x="340" y="146.5" width="8.5" height="8.5" fill="#0a0a20"/>
<path d="M341.5,153.5 l2.5,-1.5 l1.5,-4 l1,0.5 l0.5,4.5 l-1.5,0.5 z" fill="#e07020"/>
<text x="349.5" y="154.3" font-size="8" fill="#dce8ff" font-weight="bold" textLength="18.50" lengthAdjust="spacingAndGlyphs">Scope</text>
<rect x="543" y="146.5" width="8" height="7.5" fill="#d4d0c8"/>
<path d="M543,154 h8 v-7.5" fill="none" stroke="#404040" stroke-width="0.8"/>
<rect x="551" y="146.5" width="8" height="7.5" fill="#d4d0c8"/>
<path d="M551,154 h8 v-7.5" fill="none" stroke="#404040" stroke-width="0.8"/>
<rect x="560.5" y="146.5" width="8" height="7.5" fill="#d4d0c8"/>
<path d="M560.5,154 h8 v-7.5" fill="none" stroke="#404040" stroke-width="0.8"/>
<path d="M544.5,152.5 h4" stroke="#000" stroke-width="1.2"/>
<rect x="552.5" y="148" width="5" height="4.5" fill="none" stroke="#000"/><path d="M552.5,148.5 h5" stroke="#000" stroke-width="1.2"/>
<path d="M562.5,148.5 l4,4 M566.5,148.5 l-4,4" stroke="#000" stroke-width="1.1"/>
<rect x="339" y="155.2" width="230" height="2.8000000000000114" fill="#e4e2e2"/>
<line x1="342.5" y1="158" x2="342.5" y2="171" stroke="#f8f8f8" stroke-width="1" />
<line x1="344" y1="158" x2="344" y2="171" stroke="#a0a0a0" stroke-width="1" />
<path d="M347.5,163.5 h7 v4 h-7 z" fill="#c8c8c8" stroke="#303030"/>
<path d="M349,163.5 v-2.5 h4 v2.5" fill="#fff" stroke="#303030"/>
<path d="M348,167.5 v1.5 h6 v-1.5" fill="#404040" stroke="#303030"/>
<rect x="360.5" y="160.5" width="7.5" height="9" fill="#7070d0" stroke="#2a2a90"/>
<path d="M362,163 h4.5 M362,165 h4.5 M362,167 h4.5" stroke="#f0f0ff" stroke-width="0.8"/>
<line x1="372.5" y1="158" x2="372.5" y2="171" stroke="#a8a8a8" stroke-width="1" />
<circle cx="382" cy="164" r="3.2" fill="#d0e8f0" stroke="#202020" stroke-width="1"/><path d="M379.7,166.3 l-3,3" stroke="#000" stroke-width="1.6"/>
<circle cx="395.3" cy="164" r="3.2" fill="#d0e8f0" stroke="#202020" stroke-width="1"/><path d="M393.0,166.3 l-3,3" stroke="#000" stroke-width="1.6"/>
<circle cx="395.3" cy="164" r="1" fill="#303030"/>
<rect x="400.2" y="159.6" width="13.800000000000011" height="12.099999999999994" fill="#f4f4f4"/>
<circle cx="408.6" cy="164" r="3.2" fill="#fff" stroke="#202020" stroke-width="1"/><path d="M406.3,166.3 l-3,3" stroke="#000" stroke-width="1.6"/><path d="M408.6,162 v4" stroke="#303030" stroke-width="0.8"/>
<line x1="416.5" y1="158" x2="416.5" y2="171" stroke="#a8a8a8" stroke-width="1" />
<path d="M419.8,169.7 v-4.5 l1.8,-4.7 h1.8 v2.5 h2 v-2.5 h1.8 l1.8,4.7 v4.5 h-3.6 v-3 h-2 v3 z" fill="#000"/>
<rect x="433.5" y="160.5" width="8" height="9" fill="#f0f0f0" stroke="#808080"/><path d="M433.5,160.5 v9" stroke="#2a2aa0" stroke-width="1.4"/><rect x="436" y="162" width="4" height="4" fill="none" stroke="#303050" stroke-width="0.8"/><path d="M435,168 h5" stroke="#606060"/>
<rect x="446.5" y="160.5" width="8" height="9" fill="#f0f0f0" stroke="#808080"/><path d="M446.5,160.5 v9" stroke="#2a2aa0" stroke-width="1.4"/><rect x="449" y="162" width="4" height="4" fill="#b060a0" stroke="#603060" stroke-width="0.8"/><path d="M448,168 h5" stroke="#606060"/>
<line x1="458.5" y1="158" x2="458.5" y2="171" stroke="#a8a8a8" stroke-width="1" />
<rect x="463.3" y="160.7" width="7.6" height="7" rx="2" fill="#2a3ab8"/><path d="M465,164 l2,1.2 l2,-1.2" stroke="#fff" stroke-width="1.2" fill="none"/><rect x="464" y="167.5" width="6" height="1.8" fill="#707070"/>
<path d="M477,161.5 h5 v7 h-5 z M478,164 h3 M478,166 h3" fill="none" stroke="#b0b0b0"/>
<path d="M490,162 h7 M493,162 v7 M493,165 h4 M495,167 v2" fill="none" stroke="#a0a0a0"/>
<rect x="339" y="173" width="230" height="24" fill="#808080"/>
<rect x="345" y="197" width="224" height="208" fill="#808080"/>
<rect x="569" y="173" width="2" height="232" fill="#d8d8d8"/>
<rect x="571" y="210" width="4" height="88" fill="#3070b0"/>
<rect x="571" y="298" width="4" height="12" fill="#0a3060"/>
<rect x="571" y="310" width="4" height="95" fill="#20a0d8"/>
<rect x="360" y="189" width="197" height="56" fill="#000000"/>
<line x1="379.5" y1="189" x2="379.5" y2="245" stroke="#9a9a9a" stroke-width="1" stroke-dasharray="1,2"/>
<line x1="497.5" y1="189" x2="497.5" y2="245" stroke="#9a9a9a" stroke-width="1" stroke-dasharray="1,2"/>
<line x1="536.5" y1="189" x2="536.5" y2="245" stroke="#9a9a9a" stroke-width="1" stroke-dasharray="1,2"/>
<line x1="360" y1="207.5" x2="557" y2="207.5" stroke="#8a8a8a" stroke-width="1" stroke-dasharray="1,2"/>
<line x1="360" y1="226.5" x2="557" y2="226.5" stroke="#8a8a8a" stroke-width="1" stroke-dasharray="1,2"/>
<line x1="359.5" y1="226.5" x2="369.355" y2="226.5" stroke="#8e8e4c" stroke-width="1.2" />
<line x1="369.355" y1="207.5" x2="389.065" y2="207.5" stroke="#8e8e4c" stroke-width="1.2" />
<line x1="389.065" y1="226.5" x2="408.775" y2="226.5" stroke="#8e8e4c" stroke-width="1.2" />
<line x1="408.775" y1="207.5" x2="428.485" y2="207.5" stroke="#8e8e4c" stroke-width="1.2" />
<line x1="428.485" y1="226.5" x2="448.195" y2="226.5" stroke="#8e8e4c" stroke-width="1.2" />
<line x1="448.195" y1="207.5" x2="467.905" y2="207.5" stroke="#8e8e4c" stroke-width="1.2" />
<line x1="467.905" y1="226.5" x2="487.615" y2="226.5" stroke="#8e8e4c" stroke-width="1.2" />
<line x1="487.615" y1="207.5" x2="507.32500000000005" y2="207.5" stroke="#8e8e4c" stroke-width="1.2" />
<line x1="507.32500000000005" y1="226.5" x2="527.035" y2="226.5" stroke="#8e8e4c" stroke-width="1.2" />
<line x1="527.035" y1="207.5" x2="546.745" y2="207.5" stroke="#8e8e4c" stroke-width="1.2" />
<line x1="546.745" y1="226.5" x2="556.6" y2="226.5" stroke="#8e8e4c" stroke-width="1.2" />
<line x1="369.5" y1="207.5" x2="369.5" y2="226.5" stroke="#8e8e4c" stroke-width="1.2" />
<line x1="408.5" y1="207.5" x2="408.5" y2="226.5" stroke="#8e8e4c" stroke-width="1.2" />
<line x1="487.5" y1="207.5" x2="487.5" y2="226.5" stroke="#8e8e4c" stroke-width="1.2" />
<line x1="527.5" y1="207.5" x2="527.5" y2="226.5" stroke="#8e8e4c" stroke-width="1.2" />
<line x1="546.5" y1="207.5" x2="546.5" y2="226.5" stroke="#8e8e4c" stroke-width="1.2" />
<rect x="359.5" y="189.5" width="197.5" height="56" fill="none" stroke="#d8d8d8" stroke-width="1"/>
<text x="358.2" y="191.6" font-size="7.8" fill="#e4e4e4" text-anchor="end" font-weight="normal" >2</text>
<text x="358.2" y="209.6" font-size="7.8" fill="#e4e4e4" text-anchor="end" font-weight="normal" >1</text>
<text x="358.2" y="228.6" font-size="7.8" fill="#e4e4e4" text-anchor="end" font-weight="normal" >0</text>
<text x="358.2" y="247.6" font-size="7.8" fill="#e4e4e4" text-anchor="end" font-weight="normal" >-1</text>
<rect x="360" y="262" width="197" height="56" fill="#000000"/>
<line x1="379.5" y1="262" x2="379.5" y2="318" stroke="#9a9a9a" stroke-width="1" stroke-dasharray="1,2"/>
<line x1="497.5" y1="262" x2="497.5" y2="318" stroke="#9a9a9a" stroke-width="1" stroke-dasharray="1,2"/>
<line x1="536.5" y1="262" x2="536.5" y2="318" stroke="#9a9a9a" stroke-width="1" stroke-dasharray="1,2"/>
<line x1="360" y1="280.5" x2="557" y2="280.5" stroke="#8a8a8a" stroke-width="1" stroke-dasharray="1,2"/>
<line x1="360" y1="299.5" x2="557" y2="299.5" stroke="#8a8a8a" stroke-width="1" stroke-dasharray="1,2"/>
<line x1="359.5" y1="299.5" x2="389.065" y2="299.5" stroke="#8e8e4c" stroke-width="1.2" />
<line x1="389.065" y1="280.5" x2="428.485" y2="280.5" stroke="#8e8e4c" stroke-width="1.2" />
<line x1="428.485" y1="299.5" x2="467.905" y2="299.5" stroke="#8e8e4c" stroke-width="1.2" />
<line x1="467.905" y1="280.5" x2="507.32500000000005" y2="280.5" stroke="#8e8e4c" stroke-width="1.2" />
<line x1="507.32500000000005" y1="299.5" x2="546.745" y2="299.5" stroke="#8e8e4c" stroke-width="1.2" />
<line x1="546.745" y1="280.5" x2="556.6" y2="280.5" stroke="#8e8e4c" stroke-width="1.2" />
<line x1="546.5" y1="280.5" x2="546.5" y2="299.5" stroke="#8e8e4c" stroke-width="1.2" />
<rect x="359.5" y="262.5" width="197.5" height="56" fill="none" stroke="#d8d8d8" stroke-width="1"/>
<text x="358.2" y="264.6" font-size="7.8" fill="#e4e4e4" text-anchor="end" font-weight="normal" >2</text>
<text x="358.2" y="282.6" font-size="7.8" fill="#e4e4e4" text-anchor="end" font-weight="normal" >1</text>
<text x="358.2" y="301.6" font-size="7.8" fill="#e4e4e4" text-anchor="end" font-weight="normal" >0</text>
<text x="358.2" y="320.6" font-size="7.8" fill="#e4e4e4" text-anchor="end" font-weight="normal" >-1</text>
<rect x="360" y="334" width="197" height="56" fill="#000000"/>
<line x1="379.5" y1="334" x2="379.5" y2="390" stroke="#9a9a9a" stroke-width="1" stroke-dasharray="1,2"/>
<line x1="497.5" y1="334" x2="497.5" y2="390" stroke="#9a9a9a" stroke-width="1" stroke-dasharray="1,2"/>
<line x1="536.5" y1="334" x2="536.5" y2="390" stroke="#9a9a9a" stroke-width="1" stroke-dasharray="1,2"/>
<line x1="360" y1="352.5" x2="557" y2="352.5" stroke="#8a8a8a" stroke-width="1" stroke-dasharray="1,2"/>
<line x1="360" y1="371.5" x2="557" y2="371.5" stroke="#8a8a8a" stroke-width="1" stroke-dasharray="1,2"/>
<line x1="359.5" y1="371.5" x2="428.485" y2="371.5" stroke="#8e8e4c" stroke-width="1.2" />
<line x1="428.485" y1="352.5" x2="507.32500000000005" y2="352.5" stroke="#8e8e4c" stroke-width="1.2" />
<line x1="507.32500000000005" y1="371.5" x2="556.6" y2="371.5" stroke="#8e8e4c" stroke-width="1.2" />
<rect x="359.5" y="334.5" width="197.5" height="56" fill="none" stroke="#d8d8d8" stroke-width="1"/>
<text x="358.2" y="336.6" font-size="7.8" fill="#e4e4e4" text-anchor="end" font-weight="normal" >2</text>
<text x="358.2" y="354.6" font-size="7.8" fill="#e4e4e4" text-anchor="end" font-weight="normal" >1</text>
<text x="358.2" y="373.6" font-size="7.8" fill="#e4e4e4" text-anchor="end" font-weight="normal" >0</text>
<text x="358.2" y="392.6" font-size="7.8" fill="#e4e4e4" text-anchor="end" font-weight="normal" >-1</text>
<text x="360.3" y="399.3" font-size="7.6" fill="#e4e4e4" text-anchor="middle" font-weight="normal" >0</text>
<text x="380.01" y="399.3" font-size="7.6" fill="#e4e4e4" text-anchor="middle" font-weight="normal" >1</text>
<text x="399.72" y="399.3" font-size="7.6" fill="#e4e4e4" text-anchor="middle" font-weight="normal" >2</text>
<text x="419.43" y="399.3" font-size="7.6" fill="#e4e4e4" text-anchor="middle" font-weight="normal" >3</text>
<text x="439.14000000000004" y="399.3" font-size="7.6" fill="#e4e4e4" text-anchor="middle" font-weight="normal" >4</text>
<text x="458.85" y="399.3" font-size="7.6" fill="#e4e4e4" text-anchor="middle" font-weight="normal" >5</text>
<text x="478.56" y="399.3" font-size="7.6" fill="#e4e4e4" text-anchor="middle" font-weight="normal" >6</text>
<text x="498.27000000000004" y="399.3" font-size="7.6" fill="#e4e4e4" text-anchor="middle" font-weight="normal" >7</text>
<text x="517.98" y="399.3" font-size="7.6" fill="#e4e4e4" text-anchor="middle" font-weight="normal" >8</text>
<text x="537.6899999999999" y="399.3" font-size="7.6" fill="#e4e4e4" text-anchor="middle" font-weight="normal" >9</text>
<text x="557.4" y="399.3" font-size="7.6" fill="#e4e4e4" text-anchor="middle" font-weight="normal" >10</text>
</svg></body></html>
